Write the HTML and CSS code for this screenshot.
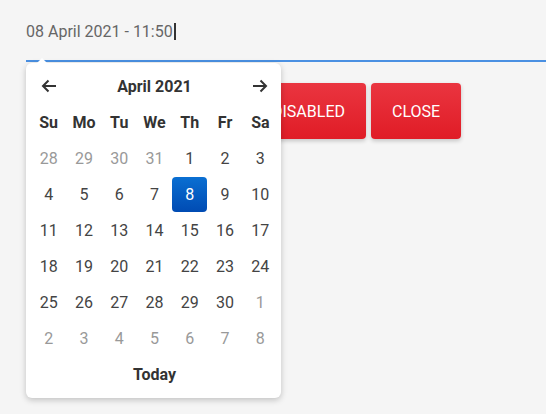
FILE: index.html
```html
<!DOCTYPE html>
<html lang="en">
<head>
  <meta charset="UTF-8" />
  <title>Date Picker</title>
  <link rel="stylesheet" href="styles.css">
</head>
<body>

  <div class="page">
    <div class="field">
      <span class="value">08 April 2021 - 11:50</span><span class="caret"></span>
    </div>

    <div class="buttons">
      <button class="btn">DISABLED</button>
      <button class="btn">CLOSE</button>
    </div>

    <div class="picker">
      <span class="tip"></span>
      <div class="grid head">
        <span class="nav">
          <svg width="16" height="14" viewBox="0 0 16 14"><path d="M15 7H2M7.5 1.5L2 7l5.5 5.5" fill="none" stroke="#333" stroke-width="2"/></svg>
        </span>
        <span class="month">April 2021</span>
        <span class="nav">
          <svg width="16" height="14" viewBox="0 0 16 14"><path d="M1 7h13M8.5 1.5L14 7l-5.5 5.5" fill="none" stroke="#333" stroke-width="2"/></svg>
        </span>
      </div>
      <div class="grid days">
        <span class="dow">Su</span><span class="dow">Mo</span><span class="dow">Tu</span><span class="dow">We</span><span class="dow">Th</span><span class="dow">Fr</span><span class="dow">Sa</span>

        <span class="day muted">28</span><span class="day muted">29</span><span class="day muted">30</span><span class="day muted">31</span><span class="day">1</span><span class="day">2</span><span class="day">3</span>
        <span class="day">4</span><span class="day">5</span><span class="day">6</span><span class="day">7</span><span class="day selected">8</span><span class="day">9</span><span class="day">10</span>
        <span class="day">11</span><span class="day">12</span><span class="day">13</span><span class="day">14</span><span class="day">15</span><span class="day">16</span><span class="day">17</span>
        <span class="day">18</span><span class="day">19</span><span class="day">20</span><span class="day">21</span><span class="day">22</span><span class="day">23</span><span class="day">24</span>
        <span class="day">25</span><span class="day">26</span><span class="day">27</span><span class="day">28</span><span class="day">29</span><span class="day">30</span><span class="day muted">1</span>
        <span class="day muted">2</span><span class="day muted">3</span><span class="day muted">4</span><span class="day muted">5</span><span class="day muted">6</span><span class="day muted">7</span><span class="day muted">8</span>
      </div>
      <div class="today">Today</div>
    </div>
  </div>

</body>
</html>
```

FILE: styles.css
```css
html,
body {
  height: 100%;
}

body {
  margin: 0;
  background: #f5f5f5;
  font-family: Roboto, "Liberation Sans", sans-serif;
  font-size: 16px;
}

.page {
  position: relative;
  min-height: 100%;
  padding-left: 26px;
}

.field {
  border-bottom: 2px solid #4a90e2;
  padding-top: 23px;
  box-sizing: border-box;
  height: 62px;
  line-height: 18px;
  color: #666;
  display: flex;
  align-items: flex-start;
}

.caret {
  display: inline-block;
  width: 2px;
  height: 17px;
  margin-left: 1px;
  background: #333;
}

/* the first button sits under the open picker */
.buttons {
  display: flex;
  gap: 5px;
  margin-top: 21px;
  margin-left: 225px;
}

.btn {
  height: 56px;
  padding: 0 21px;
  border: none;
  border-radius: 4px;
  background: linear-gradient(#ea3540, #e01c26);
  color: #fff;
  font-family: inherit;
  font-size: 16px;
  box-shadow: 0 2px 4px rgba(0, 0, 0, 0.2);
}

.picker {
  position: absolute;
  top: 63px;
  left: 26px;
  width: 255px;
  box-sizing: border-box;
  padding: 5px 3px 6px 5px;
  background: #fff;
  border-radius: 6px;
  box-shadow: 0 2px 6px rgba(0, 0, 0, 0.22);
}

.tip {
  position: absolute;
  top: -5px;
  left: 11px;
  width: 0;
  height: 0;
  border-left: 5px solid transparent;
  border-right: 5px solid transparent;
  border-bottom: 5px solid #fff;
}

.grid {
  display: grid;
  grid-template-columns: repeat(7, 1fr);
}

.head > * {
  height: 36px;
  display: flex;
  align-items: center;
  justify-content: center;
}

.month {
  grid-column: span 5;
  font-weight: bold;
  color: #333;
}

.dow,
.day {
  height: 36px;
  display: flex;
  align-items: center;
  justify-content: center;
}

.dow {
  font-weight: bold;
  color: #333;
}

.day {
  color: #444;
}

.day.muted {
  color: #999;
}

.day.selected {
  height: 35px;
  margin: 0.5px 0;
  border-radius: 4px;
  color: #fff;
  background: linear-gradient(#0a6fd2, #004bb3);
}

.today {
  height: 36px;
  display: flex;
  align-items: center;
  justify-content: center;
  font-weight: bold;
  color: #333;
}
```
